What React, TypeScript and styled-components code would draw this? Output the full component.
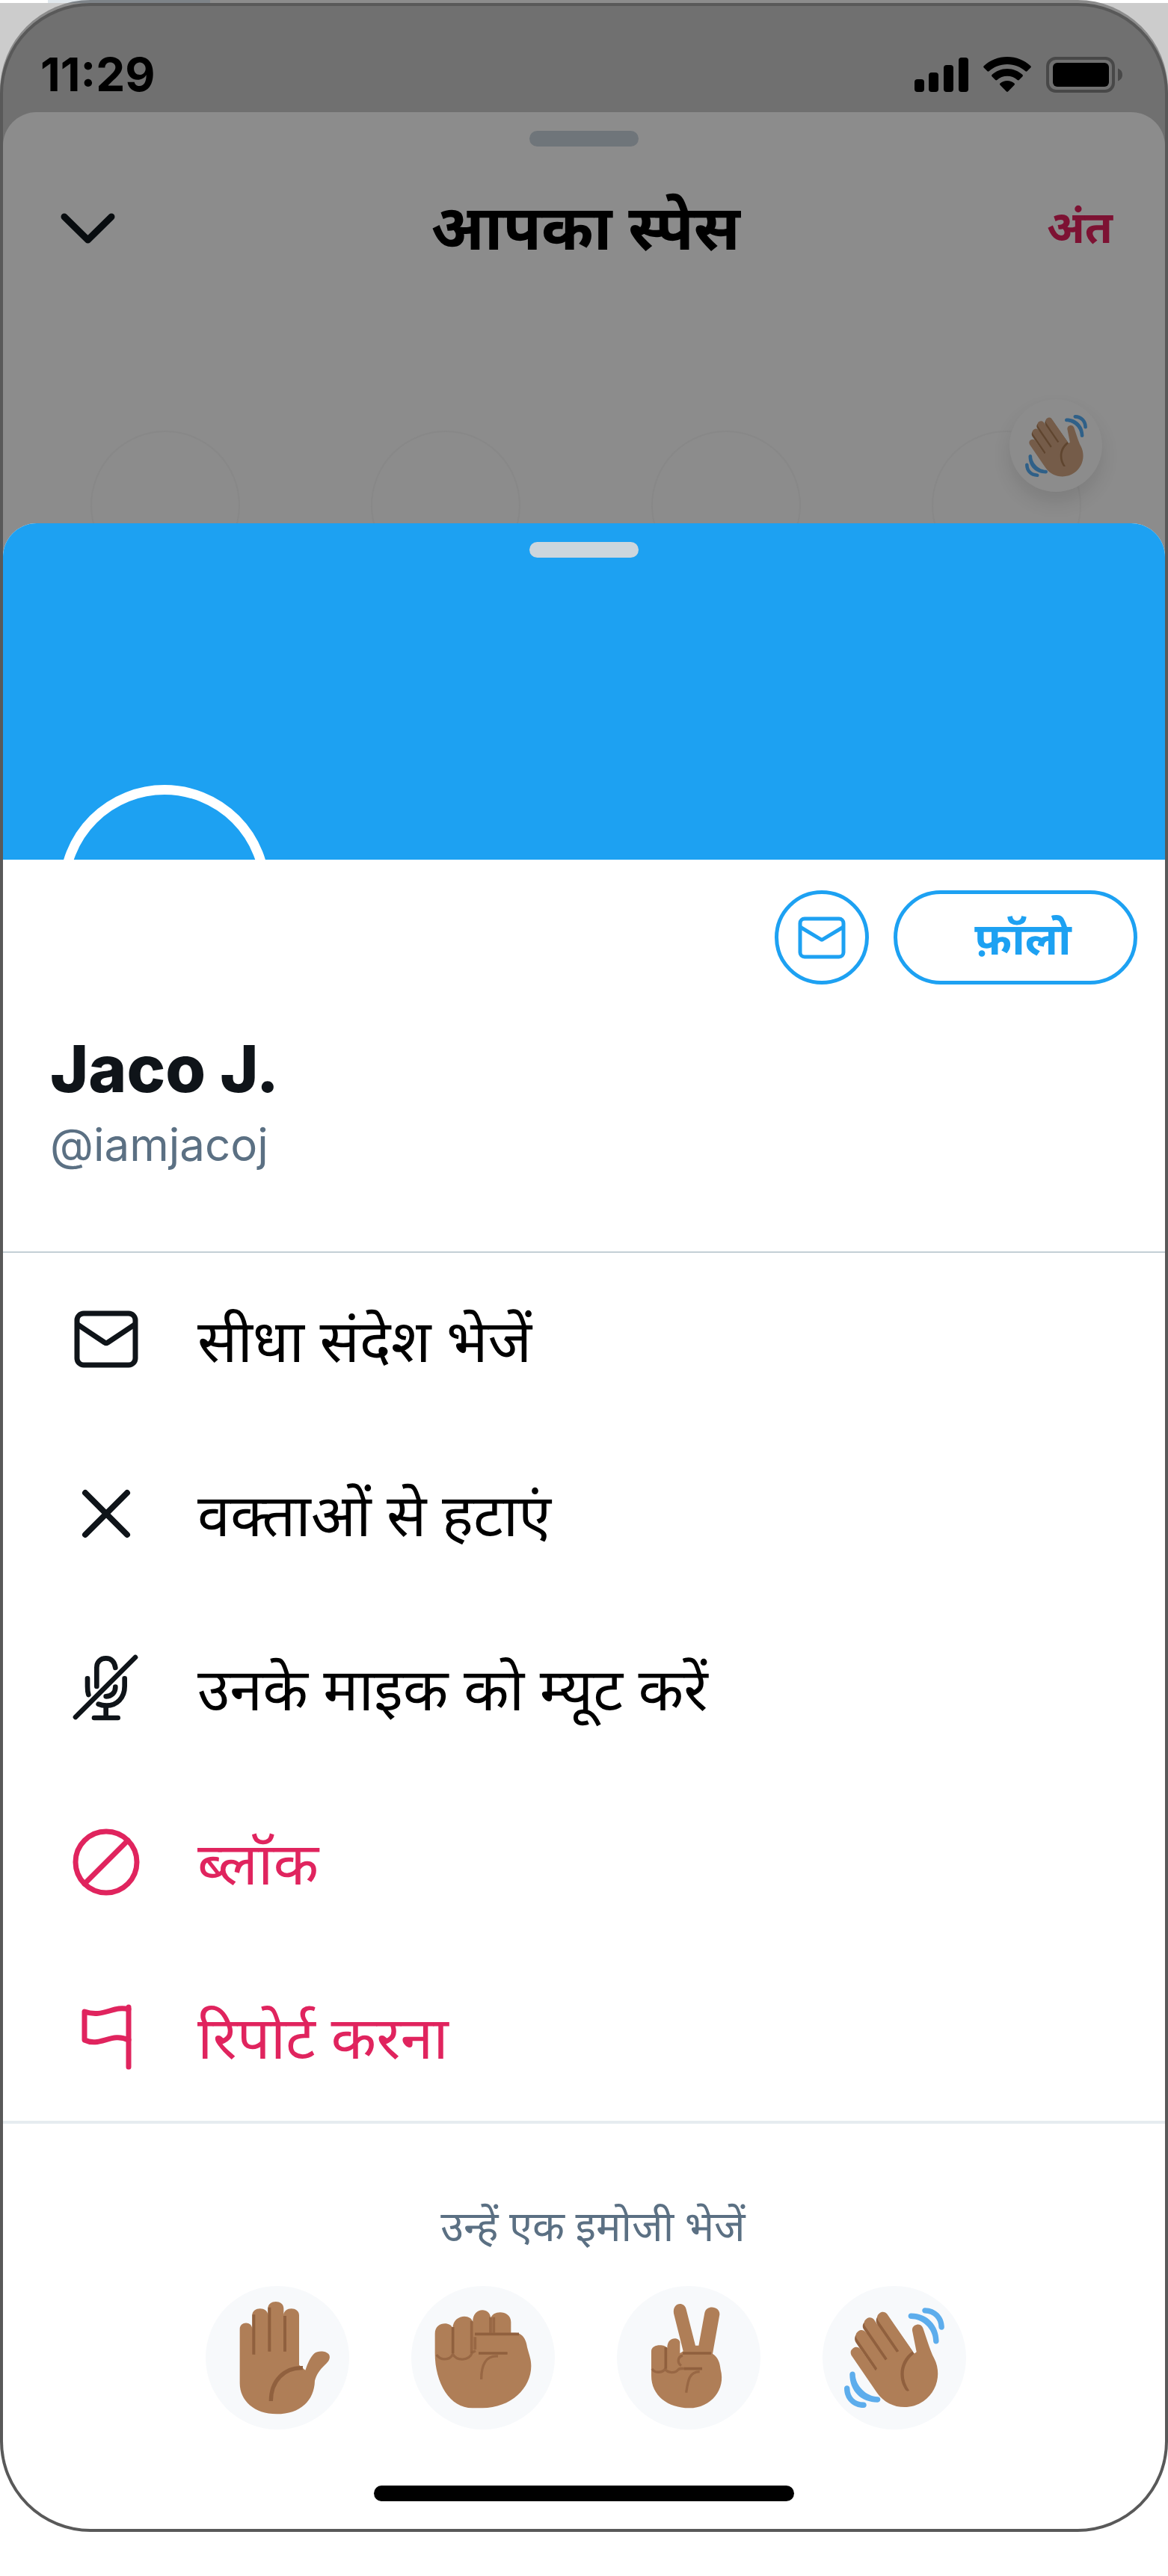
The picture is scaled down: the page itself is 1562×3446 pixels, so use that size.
import React from "react";
import styled, { createGlobalStyle } from "styled-components";

const latin = `Inter, "Noto Sans", sans-serif`;
const hindi = `"Noto Sans", Inter, sans-serif`;
const blue = "#1da1f2";
const ink = "#0f1419";
const slate = "#5b7083";
const rose = "#e0245e";
const corner = "121px";

const GlobalStyle = createGlobalStyle`
  * { box-sizing: border-box; }
  body { margin: 0; background: #fff; font-family: ${latin}; }
  h1, h2, p, ul { margin: 0; padding: 0; font-weight: inherit; }
  button { margin: 0; padding: 0; border: 0; background: none; color: inherit; font: inherit; cursor: pointer; }
  svg { display: block; flex: none; }
`;

const Stage = styled.div`
  padding-bottom: 59px;
  background:
    linear-gradient(#e1e8ed, #e1e8ed) 64px 0 / 217px 4px no-repeat,
    linear-gradient(#ccc, #ccc) 0 4px / 100% 160px no-repeat,
    #fff;
`;

const Rim = styled.div`
  padding-top: 4px;
  border-radius: ${corner};
  background:
    linear-gradient(#7d8388, #7d8388) 64px 0 / 217px 4px no-repeat,
    linear-gradient(#8c8c8c, #8c8c8c) 0 0 / 100% 400px no-repeat;
`;

const Phone = styled.main`
  overflow: hidden;
  border: 4px solid #595959;
  border-radius: ${corner};
  background: #707070;
`;

const StatusBar = styled.header`
  display: flex;
  align-items: center;
  justify-content: space-between;
  height: 142px;
  padding: 41px 57px 0 50px;
`;

const Clock = styled.time`
  font-size: 62px;
  line-height: 80px;
  font-weight: 700;
  color: #000;
`;

const StatusIcons = styled.div`
  display: flex;
  align-items: center;
  gap: 20px;
`;

const SpaceSheet = styled.section`
  position: relative;
  padding-top: 25px;
  border-radius: 45px 45px 0 0;
  background: #8c8c8c;
`;

const Grabber = styled.div<{ $tone: string }>`
  flex: none;
  width: 146px;
  height: 21px;
  margin: 0 auto;
  border-radius: 11px;
  background: ${(p) => p.$tone};
`;

const SpaceHeader = styled.div`
  display: grid;
  grid-template-columns: 1fr auto 1fr;
  align-items: center;
  height: 212px;
  padding: 0 70px 0 74px;
`;

const SpaceTitle = styled.h1`
  font-family: ${hindi};
  font-size: 84px;
  line-height: 120px;
  font-weight: 700;
  color: #000;
`;

const EndButton = styled.button`
  justify-self: end;
  font-family: ${hindi};
  font-size: 60px;
  line-height: 100px;
  font-weight: 700;
  color: #7d1233;
`;

const Speakers = styled.ul`
  display: grid;
  grid-template-columns: repeat(4, 1fr);
  justify-items: center;
  height: 337px;
  padding: 168px 25px 0 30px;
  overflow: hidden;
  list-style: none;
`;

const Speaker = styled.li`
  width: 200px;
  height: 200px;
  border: 2px solid #888;
  border-radius: 50%;
`;

const Reaction = styled.div`
  position: absolute;
  right: 84px;
  bottom: 87px;
  display: grid;
  place-items: center;
  width: 124px;
  height: 124px;
  border-radius: 50%;
  background: #8c8c8c;
  box-shadow: 0 14px 24px rgba(0, 0, 0, 0.1);
`;

const ProfileSheet = styled.section`
  position: relative;
  margin-top: -45px;
  overflow: hidden;
  border-radius: 45px 45px 0 0;
  background: #fff;
`;

const Banner = styled.div`
  display: flex;
  flex-direction: column;
  height: 450px;
  padding-top: 25px;
  overflow: hidden;
  background: ${blue};
`;

const Avatar = styled.div`
  flex: none;
  width: 282px;
  height: 282px;
  margin: 304px 0 0 75px;
  border: 13px solid #fff;
  border-radius: 50%;
`;

const Profile = styled.div`
  padding: 41px 37px 103px 63px;
  border-bottom: 2px solid #c4cfd6;
`;

const ProfileActions = styled.div`
  display: flex;
  justify-content: flex-end;
  gap: 33px;
`;

const RoundButton = styled.button`
  display: grid;
  place-items: center;
  width: 126px;
  height: 126px;
  border: 5px solid ${blue};
  border-radius: 50%;
  color: ${blue};
`;

const FollowButton = styled.button`
  width: 326px;
  height: 126px;
  padding-left: 20px;
  border: 5px solid ${blue};
  border-radius: 63px;
  font-family: ${hindi};
  font-size: 60px;
  line-height: 100px;
  font-weight: 700;
  color: ${blue};
`;

const Name = styled.h2`
  margin-top: 58px;
  font-size: 87px;
  line-height: 110px;
  font-weight: 800;
  color: ${ink};
`;

const Handle = styled.p`
  margin-top: 6px;
  font-size: 60px;
  line-height: 80px;
  color: ${slate};
`;

const Menu = styled.ul`
  display: flex;
  flex-direction: column;
  gap: 93px;
  padding: 46px 90px 43px;
  border-bottom: 4px solid #e6ecf0;
  list-style: none;
`;

const MenuButton = styled.button<{ $danger?: boolean }>`
  display: flex;
  align-items: center;
  gap: 74px;
  width: 100%;
  height: 140px;
  font-family: ${hindi};
  font-size: 79px;
  line-height: 120px;
  text-align: left;
  color: ${(p) => (p.$danger ? rose : "#000")};
`;

const EmojiPanel = styled.div`
  padding: 95px 0 37px;
  text-align: center;
`;

const EmojiLabel = styled.p`
  padding-left: 24px;
  font-family: ${hindi};
  font-size: 56px;
  line-height: 80px;
  color: ${slate};
`;

const EmojiRow = styled.div`
  display: flex;
  justify-content: center;
  gap: 83px;
  margin-top: 42px;
  padding-left: 4px;
`;

const EmojiButton = styled.button`
  display: grid;
  place-items: center;
  width: 192px;
  height: 192px;
  border-radius: 50%;
  background: #f7f9fb;
`;

const HomeBar = styled.div`
  width: 562px;
  height: 21px;
  margin: 75px auto 0;
  border-radius: 11px;
  background: #000;
`;

const Signal = () => (
  <svg width="72" height="46" viewBox="0 0 72 46" aria-hidden="true">
    <rect x="0" y="29" width="13" height="17" rx="4" />
    <rect x="19" y="20" width="13" height="26" rx="4" />
    <rect x="39" y="10" width="13" height="36" rx="4" />
    <rect x="59" y="0" width="13" height="46" rx="4" />
  </svg>
);

const Wifi = () => (
  <svg width="64" height="47" viewBox="0 0 64 47" aria-hidden="true">
    <path d="M32 0C44 0 55 4.500 63.300 12.300Q64.300 13.500 63.300 14.500L58.500 19.300Q57.500 20.200 56.400 19.300C50 13.500 41.500 10 32 10S14 13.500 7.600 19.300Q6.500 20.200 5.500 19.300L.7 14.500Q-.3 13.500.7 12.300C9 4.500 20 0 32 0Z" />
    <path d="M32 16C40 16 47 19 52.500 24Q53.500 25 52.500 26.200L47.800 31Q46.700 31.900 45.600 31C42 27.700 37 25.800 32 25.800S22 27.700 18.400 31Q17.300 31.900 16.200 31L11.500 26.200Q10.500 25 11.500 24C17 19 24 16 32 16Z" />
    <path d="M32 32C35.500 32 39 33.300 41.500 35.500Q42.500 36.600 41.500 37.700L33.200 46.200Q32 47.200 30.800 46.200L22.500 37.700Q21.500 36.600 22.500 35.500C25 33.300 28.500 32 32 32Z" />
  </svg>
);

const Battery = () => (
  <svg width="102" height="48" viewBox="0 0 102 48" aria-hidden="true">
    <rect x="2" y="2" width="88" height="44" rx="11" fill="none" stroke="#484848" strokeWidth="4" />
    <rect x="9" y="8" width="75" height="32" rx="6" />
    <path d="M96 15.500C100 17 102 20 102 24S100 31 96 32.500Z" fill="#484848" />
  </svg>
);

const Chevron = () => (
  <svg width="84" height="60" viewBox="0 0 84 60" fill="none" stroke="#080c0f" strokeWidth="9" strokeLinecap="round" strokeLinejoin="round" aria-hidden="true">
    <path d="M8 18L39.500 49L71 18" />
  </svg>
);

const Envelope = ({ width, height }: { width: number; height: number }) => (
  <svg width={width} height={height} viewBox={`0 0 ${width} ${height}`} fill="none" stroke="currentColor" aria-hidden="true">
    <rect x="3" y="3" width={width - 6} height={height - 6} rx="6" strokeWidth="5" />
    <path d={`M3 14L${width / 2 - 2} ${height * 0.53}Q${width / 2} ${height * 0.56} ${width / 2 + 2} ${height * 0.53}L${width - 3} 14`} strokeWidth="5" />
  </svg>
);

type IconProps = { children: React.ReactNode; color?: string };
const MenuIcon = ({ children, color = ink }: IconProps) => (
  <svg width="96" height="96" viewBox="0 0 96 96" fill="none" stroke={color} strokeWidth="7" strokeLinecap="round" strokeLinejoin="round" aria-hidden="true">
    {children}
  </svg>
);

const MailIcon = () => (
  <MenuIcon>
    <rect x="9" y="13" width="78" height="69" rx="9" />
    <path d="M10 28L46 52Q48 53.500 50 52L86 28" />
  </MenuIcon>
);
const CloseIcon = () => (
  <MenuIcon>
    <path d="M20 20L76 76M76 20L20 76" strokeWidth="8" />
  </MenuIcon>
);
const MutedMicIcon = () => (
  <svg width="96" height="96" viewBox="42 30 288 288" fill="none" stroke={ink} strokeWidth="20" strokeLinecap="round" strokeLinejoin="round" aria-hidden="true">
    <path d="M303 51L63 291" />
    <path d="M148 168V92C148 70 163 55 185 55S220 70 223 93" />
    <path d="M111 136V168Q111 188 115 201" />
    <path d="M260 136V167C260 213 229 245 187 245Q169 245 155 239" />
    <path d="M223 170C223 194 206 208 185 208" />
    <path d="M185 246V293M138 294H233" />
  </svg>
);
const BlockIcon = () => (
  <MenuIcon color={rose}>
    <circle cx="48" cy="48" r="41" />
    <path d="M19 77L77 19" />
  </MenuIcon>
);
const FlagIcon = () => (
  <MenuIcon color={rose}>
    <path d="M78 9V89" />
    <path d="M78 12C58 6 44 24 19 15V53C40 63 55 42 78 53" />
  </MenuIcon>
);

const skin = "#af7e57";
const crease = "#90603e";

const RaisedHand = () => (
  <svg width="192" height="192" viewBox="30 30 576 576" aria-hidden="true">
    <path fill={skin} d="M167 420V203C167 170 217 170 217 203V147C217 112 280 112 280 147V120C280 84 343 84 343 120V147C343 112 405 112 405 147V347C412 352 420 360 430 368C440 340 450 315 466 301C480 288 515 290 525 305C533 320 522 335 508 347C488 366 475 385 468 410C466 490 410 544 315 544C225 544 167 490 167 420Z" />
    <path fill="none" stroke={crease} strokeWidth="12" d="M223 145V305M286 116V293M348 150V293" />
    <path fill="none" stroke={crease} strokeWidth="16" d="M420 359C345 357 292 410 292 492" />
  </svg>
);

const Fist = () => (
  <svg width="192" height="192" viewBox="30 30 576 576" aria-hidden="true">
    <path fill={skin} d="M125 222C125 170 190 173 196 200C198 142 270 140 277 175C274 116 346 112 349 160C355 125 430 125 430 175V218H448C482 220 492 252 496 280C504 310 511 325 511 352C511 440 430 520 315 520H275C185 520 125 420 125 300Z" />
    <g fill="none" stroke={crease} strokeWidth="11">
      <path d="M197 195V300M285 223H462M300 300H416" />
      <path opacity=".75" d="M272 170V300M286 235V285M348 155V218M361 155V218" />
      <path opacity=".75" d="M131 306C148 330 184 330 197 304C212 332 262 332 275 297L288 290M378 312C328 308 311 348 311 405" strokeWidth="10" />
    </g>
  </svg>
);

const Victory = () => (
  <svg width="192" height="192" viewBox="30 30 576 576" aria-hidden="true">
    <path fill={skin} d="M168 292C168 263 222 262 232 280C230 232 279 233 283 255V300L296 292L258 140C252 96 300 90 308 124L345 269H358L382 138C390 103 445 112 442 145L414 302C438 318 443 340 446 365C468 445 408 520 320 520C235 520 168 470 168 390Z" />
    <g fill="none" stroke={crease} strokeWidth="11">
      <path d="M226 276V362M294 300H408M300 362H372" />
      <path opacity=".75" d="M171 362C180 380 210 380 223 364C235 381 265 380 275 367C280 360 290 361 305 362M294 309C272 314 272 340 288 350M362 374C320 374 315 410 308 458" strokeWidth="10" />
    </g>
  </svg>
);

type WaveProps = { size: number; tone: string; line: string; motion: string };
const Wave = ({ size, tone, line, motion }: WaveProps) => (
  <svg width={size} height={size} viewBox="0 0 36 36" aria-hidden="true">
    <path fill={line} d="M4.861 9.147c.94-.657 2.357-.531 3.201.166l-.968-1.407c-.779-1.111-.5-2.313.612-3.093 1.112-.777 4.263 1.312 4.263 1.312-.786-1.122-.639-2.544.483-3.331 1.122-.784 2.670-.513 3.456.611l10.420 14.720L25 31l-11.083-4.042L4.250 12.625c-.793-1.129-.519-2.686.611-3.478z" />
    <path fill={tone} d="M2.695 17.336s-1.132-1.650.519-2.781c1.649-1.131 2.780.518 2.780.518l5.251 7.658c.181-.302.379-.6.6-.894L4.557 11.210s-1.131-1.649.519-2.780c1.649-1.131 2.780.518 2.780.518l6.855 9.997c.255-.208.516-.417.785-.622L7.549 6.732s-1.131-1.649.519-2.780c1.649-1.131 2.780.518 2.780.518l7.947 11.589c.292-.179.581-.334.871-.498L12.238 4.729s-1.131-1.649.518-2.780c1.649-1.131 2.780.518 2.780.518l7.854 11.454 1.194 1.742c-4.948 3.394-5.419 9.779-2.592 13.902.565.825 1.390.26 1.390.26-3.393-4.949-2.357-10.510 2.592-13.903L24.515 8.620s-.545-1.924 1.378-2.470c1.924-.545 2.470 1.379 2.470 1.379l1.685 5.004c.668 1.984 1.379 3.961 2.320 5.831 2.657 5.280 1.070 11.842-3.940 15.279-5.465 3.747-12.936 2.354-16.684-3.110L2.695 17.336z" />
    <g fill={motion}>
      <path d="M12 32.042C8 32.042 3.958 28 3.958 24c0-.553-.405-1-.958-1s-1.042.447-1.042 1C1.958 30 6 34.042 12 34.042c.553 0 1-.489 1-1.042s-.447-.958-1-.958z" />
      <path d="M7 34c-3 0-5-2-5-5 0-.553-.447-1-1-1s-1 .447-1 1c0 4 3 7 7 7 .553 0 1-.447 1-1s-.447-1-1-1zM24 2c-.552 0-1 .448-1 1s.448 1 1 1c4 0 8 3.589 8 8 0 .552.448 1 1 1s1-.448 1-1c0-5.514-4-10-10-10z" />
      <path d="M29 .042c-.552 0-1 .406-1 .958s.448 1.042 1 1.042c3 0 4.958 2.225 4.958 4.958 0 .552.489 1 1.042 1s.958-.448.958-1C35.958 3.163 33 .042 29 .042z" />
    </g>
  </svg>
);

const actions = [
  { label: "सीधा संदेश भेजें", icon: <MailIcon /> },
  { label: "वक्ताओं से हटाएं", icon: <CloseIcon /> },
  { label: "उनके माइक को म्यूट करें", icon: <MutedMicIcon /> },
  { label: "ब्लॉक", icon: <BlockIcon />, danger: true },
  { label: "रिपोर्ट करना", icon: <FlagIcon />, danger: true },
];

const emojis = [
  { name: "raised-hand", art: <RaisedHand /> },
  { name: "fist", art: <Fist /> },
  { name: "victory", art: <Victory /> },
  { name: "wave", art: <Wave size={134} tone={skin} line={crease} motion="#5dadec" /> },
];

export default function App() {
  return (
    <Stage lang="hi">
      <GlobalStyle />
      <Rim>
        <Phone>
          <StatusBar>
            <Clock>11:29</Clock>
            <StatusIcons>
              <Signal />
              <Wifi />
              <Battery />
            </StatusIcons>
          </StatusBar>

          <SpaceSheet>
            <Grabber $tone="#6f757a" />
            <SpaceHeader>
              <button type="button">
                <Chevron />
              </button>
              <SpaceTitle>आपका स्पेस</SpaceTitle>
              <EndButton type="button">अंत</EndButton>
            </SpaceHeader>
            <Speakers>
              {[0, 1, 2, 3].map((n) => (
                <Speaker key={n} />
              ))}
            </Speakers>
            <Reaction>
              <Wave size={83} tone="#755c49" line="#5f452f" motion="#2f6088" />
            </Reaction>
          </SpaceSheet>

          <ProfileSheet>
            <Banner>
              <Grabber $tone="#ccd6dd" />
              <Avatar />
            </Banner>
            <Profile>
              <ProfileActions>
                <RoundButton type="button">
                  <Envelope width={64} height={57} />
                </RoundButton>
                <FollowButton type="button">फ़ॉलो</FollowButton>
              </ProfileActions>
              <Name>Jaco J.</Name>
              <Handle>@iamjacoj</Handle>
            </Profile>

            <Menu>
              {actions.map((a) => (
                <li key={a.label}>
                  <MenuButton type="button" $danger={a.danger}>
                    {a.icon}
                    <span>{a.label}</span>
                  </MenuButton>
                </li>
              ))}
            </Menu>

            <EmojiPanel>
              <EmojiLabel>उन्हें एक इमोजी भेजें</EmojiLabel>
              <EmojiRow>
                {emojis.map((e) => (
                  <EmojiButton type="button" key={e.name}>
                    {e.art}
                  </EmojiButton>
                ))}
              </EmojiRow>
              <HomeBar />
            </EmojiPanel>
          </ProfileSheet>
        </Phone>
      </Rim>
    </Stage>
  );
}
